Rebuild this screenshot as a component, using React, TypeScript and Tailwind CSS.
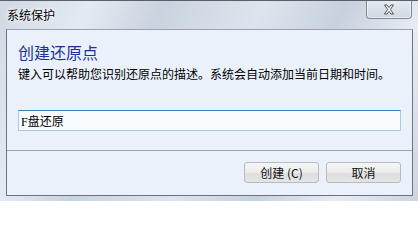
import { useState } from 'react'

const cjk = "font-['Noto_Sans_CJK_SC','Noto_Sans',sans-serif]"

function CloseGlyph() {
    return (
        <svg width="12" height="11" viewBox="0 0 12 11" className="block">
            <path
                d="M1.5 1 L4 1 L6 3.5 L8 1 L10.5 1 L7.3 5.5 L10.5 10 L8 10 L6 7.5 L4 10 L1.5 10 L4.7 5.5 Z"
                fill="#ffffff"
                stroke="#4a5058"
                strokeWidth="1"
                strokeLinejoin="round"
            />
        </svg>
    )
}

function DialogButton({ label }: { label: string }) {
    return (
        <button
            type="button"
            className={`flex h-[21px] w-[75px] items-center justify-center rounded-[3px] border border-[#b7bbc0] bg-[linear-gradient(#f6f6f6,#ebebeb_50%,#dedede_51%,#e4e4e4)] text-[12px] leading-none text-[#111] ${cjk}`}
        >
            {label}
        </button>
    )
}

export default function App() {
    const [name, setName] = useState('F盘还原')

    return (
        <div className="flex h-[201px] w-[418px] flex-col overflow-hidden border-t border-[#59606a] bg-[linear-gradient(115deg,#cfd8e3_0%,#e4eaf1_18%,#c9d3df_32%,#dde4ed_52%,#c7d1de_68%,#e7ecf2_84%,#cbd5e1_100%)]">
            <div className="flex h-[28px] shrink-0 items-start justify-between pl-[7px] pr-[6px]">
                <span className={`mt-[6px] text-[12px] leading-[16px] text-black [text-shadow:0_0_6px_#ffffff,0_0_3px_#ffffff] ${cjk}`}>
                    系统保护
                </span>
                <div className="-mt-px flex h-[19px] w-[46px] items-center justify-center rounded-b-[4px] border border-t-0 border-[#7e8894] bg-[linear-gradient(#e6ebf1,#cfd7e1)] shadow-[inset_0_0_0_1px_rgba(255,255,255,0.6)]">
                    <CloseGlyph />
                </div>
            </div>

            <div className="mb-[5px] ml-[6px] mr-[5px] flex flex-1 flex-col border border-[#6b737d] border-t-[#9aa4b0] bg-[#eaf1fa]">
                <div className="flex flex-col px-[11px]">
                    <h1 className={`mt-[12px] text-[16px] leading-[20px] font-normal text-[#1b3399] ${cjk}`}>
                        创建还原点
                    </h1>
                    <p className={`mt-[4px] text-[12px] leading-[16px] text-black ${cjk}`}>
                        键入可以帮助您识别还原点的描述。系统会自动添加当前日期和时间。
                    </p>
                    <input
                        value={name}
                        onChange={(event) => setName(event.target.value)}
                        className={`mt-[28px] h-[21px] w-full border border-[#a9cbe6] border-t-[#3e7eb4] bg-[#f8fbfe] px-[2px] text-[12px] leading-none text-black outline-none font-['Liberation_Serif','Noto_Sans_CJK_SC',serif]`}
                    />
                </div>
                <div className="mt-[19px] h-px w-full bg-[#a3a3a3]" />
                <div className="flex justify-end gap-[7px] pr-[11px] pt-[11px]">
                    <DialogButton label="创建 (C)" />
                    <DialogButton label="取消" />
                </div>
            </div>
        </div>
    )
}
